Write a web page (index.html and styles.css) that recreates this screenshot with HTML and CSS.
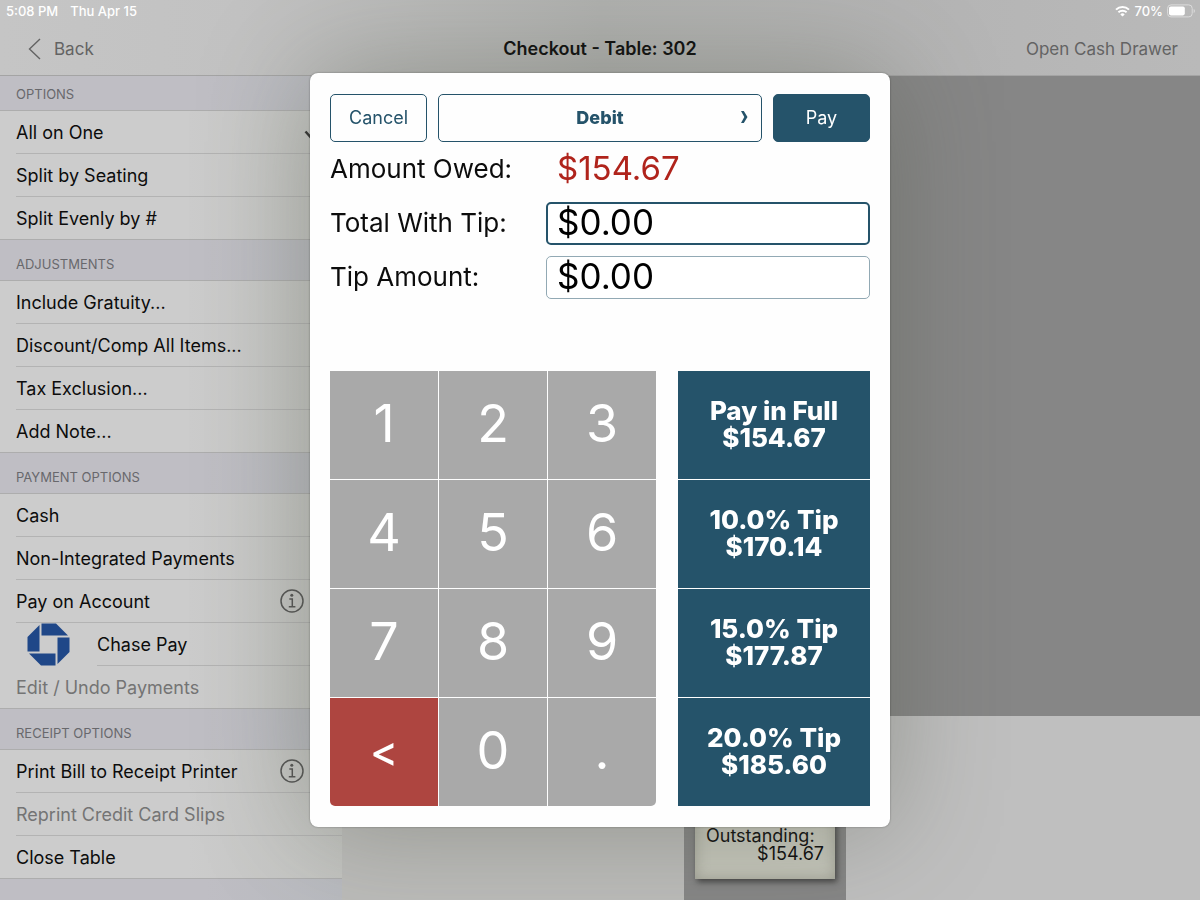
FILE: index.html
```html
<!DOCTYPE html>
<html lang="en">
<head>
    <meta charset="UTF-8">
    <meta name="viewport" content="width=device-width, initial-scale=1.0">
    <title>Checkout - Table: 302</title>
    <link rel="stylesheet" href="styles.css">
</head>
<body>

    <header>
        <div class="statusbar">
            <span>5:08 PM</span>
            <span>Thu Apr 15</span>
            <div class="battery">
                <svg width="15" height="12" viewBox="0 0 15 12">
                    <path d="M1 4.6a9.4 9.4 0 0 1 13 0" fill="none" stroke="#fff" stroke-width="2"/>
                    <path d="M3.4 7.3a6 6 0 0 1 8.2 0" fill="none" stroke="#fff" stroke-width="1.9"/>
                    <path d="M7.5 11.6L5.3 9.4a3.2 3.2 0 0 1 4.4 0z" fill="#fff"/>
                </svg>
                <span>70%</span>
                <svg width="29" height="14" viewBox="0 0 29 14">
                    <rect x="0.6" y="0.9" width="24.6" height="12" rx="3.4" fill="none" stroke="#dcdcdc"/>
                    <rect x="2" y="2.4" width="15.8" height="9" rx="1.8" fill="#fff"/>
                    <path d="M26.7 5v4c1.6-.7 1.6-3.3 0-4z" fill="#dcdcdc"/>
                </svg>
            </div>
        </div>
        <nav class="navbar">
            <button class="navbtn" type="button">
                <svg width="13" height="22" viewBox="0 0 13 22"><path d="M12 1L1.5 11 12 21" fill="none" stroke="#636363" stroke-width="1.4"/></svg>
                Back
            </button>
            <h1>Checkout - Table: 302</h1>
            <button class="navbtn drawer" type="button">Open Cash Drawer</button>
        </nav>
    </header>

    <div class="page">

        <aside class="sidebar">
            <h2 class="first">OPTIONS</h2>
            <ul>
                <li><button class="row checked" type="button">All on One
                    <svg width="18" height="16" viewBox="0 0 18 16"><path d="M1.5 7.5l5 5.5L16.5 1.5" fill="none" stroke="#333" stroke-width="2.5"/></svg>
                </button></li>
                <li><button class="row" type="button">Split by Seating</button></li>
                <li><button class="row" type="button">Split Evenly by #</button></li>
            </ul>

            <h2>ADJUSTMENTS</h2>
            <ul>
                <li><button class="row" type="button">Include Gratuity...</button></li>
                <li><button class="row" type="button">Discount/Comp All Items...</button></li>
                <li><button class="row" type="button">Tax Exclusion...</button></li>
                <li><button class="row" type="button">Add Note...</button></li>
            </ul>

            <h2>PAYMENT OPTIONS</h2>
            <ul>
                <li><button class="row" type="button">Cash</button></li>
                <li><button class="row" type="button">Non-Integrated Payments</button></li>
                <li><button class="row" type="button">Pay on Account
                    <svg width="24" height="24" viewBox="0 0 24 24"><circle cx="12" cy="12" r="11" fill="none" stroke="#555" stroke-width="1.5"/><circle cx="11.8" cy="6.3" r="1.5" fill="#555"/><path d="M9.3 10h3v7.500M8.8 17.7h6.600" fill="none" stroke="#555" stroke-width="1.5"/></svg>
                </button></li>
                <li class="chase">
                    <svg width="43" height="43" viewBox="0 0 43 43" fill="#1f4788">
                        <path d="M14.5 0.5H29L41 12.5H14.5z"/>
                        <path d="M42.5 14.5V29L30.5 41V14.5z"/>
                        <path d="M28.5 42.5H14L2 30.5H28.5z"/>
                        <path d="M0.5 28.5V14L12.5 2V28.5z"/>
                    </svg>
                    <button class="row" type="button">Chase Pay</button>
                </li>
                <li><button class="row" type="button" disabled>Edit / Undo Payments</button></li>
            </ul>

            <h2>RECEIPT OPTIONS</h2>
            <ul>
                <li><button class="row" type="button">Print Bill to Receipt Printer
                    <svg width="24" height="24" viewBox="0 0 24 24"><circle cx="12" cy="12" r="11" fill="none" stroke="#555" stroke-width="1.5"/><circle cx="11.8" cy="6.3" r="1.5" fill="#555"/><path d="M9.3 10h3v7.500M8.8 17.7h6.600" fill="none" stroke="#555" stroke-width="1.5"/></svg>
                </button></li>
                <li><button class="row" type="button" disabled>Reprint Credit Card Slips</button></li>
                <li><button class="row" type="button">Close Table</button></li>
            </ul>
        </aside>

        <main class="bill"></main>

        <section class="receipts">
            <div class="receipt">
                <p>Outstanding:</p>
                <p class="due">$154.67</p>
            </div>
        </section>

        <section class="details">
            <div class="detailstop"></div>
            <div class="detailsbottom"></div>
        </section>

    </div>

    <div class="overlay">
        <form class="modal">
            <div class="actions">
                <button class="btn" type="button">Cancel</button>
                <button class="btn type" type="button">Debit
                    <svg width="7" height="12" viewBox="0 0 7 12"><path d="M0 0h2.8L6.5 6 2.8 12H0L3.3 6z" fill="#25536a"/></svg>
                </button>
                <button class="btn pay" type="button">Pay</button>
            </div>

            <div class="field">
                <span>Amount Owed:</span>
                <span class="owed">$154.67</span>
            </div>
            <div class="field">
                <label for="total">Total With Tip:</label>
                <input class="active" type="text" id="total" value="$0.00" autocomplete="off">
            </div>
            <div class="field">
                <label for="tip">Tip Amount:</label>
                <input type="text" id="tip" value="$0.00" autocomplete="off">
            </div>

            <div class="pad">
                <div class="keys">
                    <button type="button">1</button>
                    <button type="button">2</button>
                    <button type="button">3</button>
                    <button type="button">4</button>
                    <button type="button">5</button>
                    <button type="button">6</button>
                    <button type="button">7</button>
                    <button type="button">8</button>
                    <button type="button">9</button>
                    <button class="delete" type="button">&lt;</button>
                    <button type="button">0</button>
                    <button type="button">.</button>
                </div>
                <div class="tips">
                    <button type="button">Pay in Full<br>$154.67</button>
                    <button type="button">10.0% Tip<br>$170.14</button>
                    <button type="button">15.0% Tip<br>$177.87</button>
                    <button type="button">20.0% Tip<br>$185.60</button>
                </div>
            </div>
        </form>
    </div>

</body>
</html>
```
FILE: styles.css
```css
* {
    box-sizing: border-box;
    margin: 0;
    padding: 0;
}

body {
    font-family: "Inter", "Liberation Sans", sans-serif;
    min-height: 100vh;
    display: flex;
    flex-direction: column;
    background-color: #bcbcbc;
    color: #0c0c0c;
}

button {
    font-family: inherit;
    border: none;
    background: none;
    cursor: pointer;
}

/* top bar */

header {
    background: linear-gradient(to right, #c5c5c5, #c2c2c2 20%, #b0b1af 50%, #b4b4b4 75%, #b9b9b9);
    border-bottom: 1px solid #a4a4a4;
}

.statusbar {
    display: flex;
    gap: 12px;
    height: 22px;
    align-items: center;
    padding: 0 4px 0 6px;
    color: #fff;
    font-size: 13px;
    font-weight: 500;
}

.battery {
    display: flex;
    align-items: center;
    gap: 4px;
    margin-left: auto;
}

.navbar {
    display: grid;
    grid-template-columns: 1fr auto 1fr;
    align-items: center;
    height: 53px;
    padding: 0 22px;
}

.navbar h1 {
    font-size: 18px;
    font-weight: 600;
}

.navbtn {
    display: flex;
    align-items: center;
    gap: 13px;
    padding-left: 6px;
    font-size: 17px;
    color: #636363;
}

.drawer {
    justify-self: end;
}

.page {
    flex: 1;
    display: flex;
}

/* left menu */

.sidebar {
    width: 342px;
    background: linear-gradient(to right, #bfbec4 60%, #b9bbc0);
}

.sidebar h2 {
    display: flex;
    align-items: flex-end;
    height: 41px;
    padding: 0 16px 7px;
    line-height: 20px;
    font-size: 13px;
    font-weight: 400;
    color: #68686c;
}

.sidebar .first {
    height: 35px;
}

.sidebar ul {
    list-style: none;
    background: linear-gradient(to right, #cccccc 55%, #c3c4c1);
    border-top: 1px solid #adadad;
    border-bottom: 1px solid #adadad;
    margin-top: -1px;
}

.sidebar li {
    padding-left: 16px;
}

.row {
    display: flex;
    align-items: center;
    justify-content: space-between;
    width: 100%;
    height: 43px;
    padding-right: 38px;
    border-bottom: 1px solid #b3b3b3;
    font-size: 18px;
    text-align: left;
    color: #0c0c0c;
}

li:last-child .row {
    height: 42px;
    border-bottom: none;
}

.row:disabled {
    color: #747474;
}

.checked {
    padding-right: 20px;
}

.chase {
    display: flex;
    align-items: center;
}

.sidebar .chase {
    padding-left: 27px;
    gap: 27px;
}

.chase svg {
    flex: none;
}

/* behind the dialog */

.bill {
    flex: 1;
    background-color: #bcbcba;
}

.receipts {
    width: 162px;
    display: flex;
    flex-direction: column;
    padding: 0 11px 21px;
    background-color: #868686;
}

.receipt {
    flex: 1;
    display: flex;
    flex-direction: column;
    justify-content: flex-end;
    padding: 0 11px 16px;
    background-color: #c6c7bc;
    box-shadow: 2px 3px 6px rgba(0, 0, 0, 0.5), inset 0 0 14px rgba(120, 120, 105, 0.5);
    font-size: 18px;
    line-height: 18px;
}

.due {
    text-align: right;
}

.details {
    width: 354px;
    display: flex;
    flex-direction: column;
}

.detailstop {
    flex: 1;
    background-color: #868686;
}

.detailsbottom {
    height: 184px;
    background-color: #bfbfbf;
}

/* payment dialog */

.overlay {
    position: fixed;
    inset: 0;
    display: flex;
    align-items: center;
    justify-content: center;
}

.modal {
    width: 580px;
    padding: 21px 20px;
    background-color: #fefefe;
    border-radius: 8px;
    box-shadow: 0 0 2px rgba(0, 0, 0, 0.4), 0 0 110px rgba(80, 85, 70, 0.4);
}

.actions {
    display: grid;
    grid-template-columns: 97px 1fr 97px;
    gap: 11px;
}

.btn {
    height: 48px;
    padding-bottom: 2px;
    border: 1px solid #25536a;
    border-radius: 5px;
    font-size: 18px;
    color: #25536a;
}

.type {
    display: grid;
    grid-template-columns: 1fr auto 1fr;
    align-items: center;
    padding: 0 13px 2px;
    font-weight: 800;
}

.type::before {
    content: "";
}

.type svg {
    justify-self: end;
}

.pay {
    background-color: #25536a;
    color: #fff;
}

.field {
    display: grid;
    grid-template-columns: 1fr 324px;
    align-items: center;
    height: 54px;
    font-size: 26px;
}

.field span,
.field label {
    padding-bottom: 2px;
}

.field .owed {
    padding-left: 11px;
    font-size: 33px;
    color: #b0241c;
}

.field input {
    width: 100%;
    height: 43px;
    padding: 0 10px 3px;
    border: 1px solid #92a9b4;
    border-radius: 5px;
    background-color: #fff;
    font-family: inherit;
    font-size: 35px;
    color: #000;
    outline: none;
}

.field .active {
    border: 2px solid #25536a;
    padding: 0 9px 3px;
}

.pad {
    display: flex;
    gap: 22px;
    margin-top: 67px;
}

.keys {
    flex: 1;
    display: grid;
    grid-template-columns: 1fr 1fr 1fr;
    grid-auto-rows: 108px;
    gap: 1px;
    border-radius: 0 0 5px 5px;
    overflow: hidden;
}

.keys button {
    padding-bottom: 3px;
    background-color: #a9a9a9;
    color: #fff;
    font-size: 52px;
}

.keys .delete {
    background-color: #ae4540;
    font-size: 42px;
    font-weight: 500;
}

.tips {
    width: 192px;
    display: grid;
    grid-auto-rows: 108px;
    gap: 1px;
}

.tips button {
    padding-bottom: 2px;
    background-color: #25536a;
    color: #fff;
    font-size: 26px;
    font-weight: 800;
    line-height: 27px;
}
```
